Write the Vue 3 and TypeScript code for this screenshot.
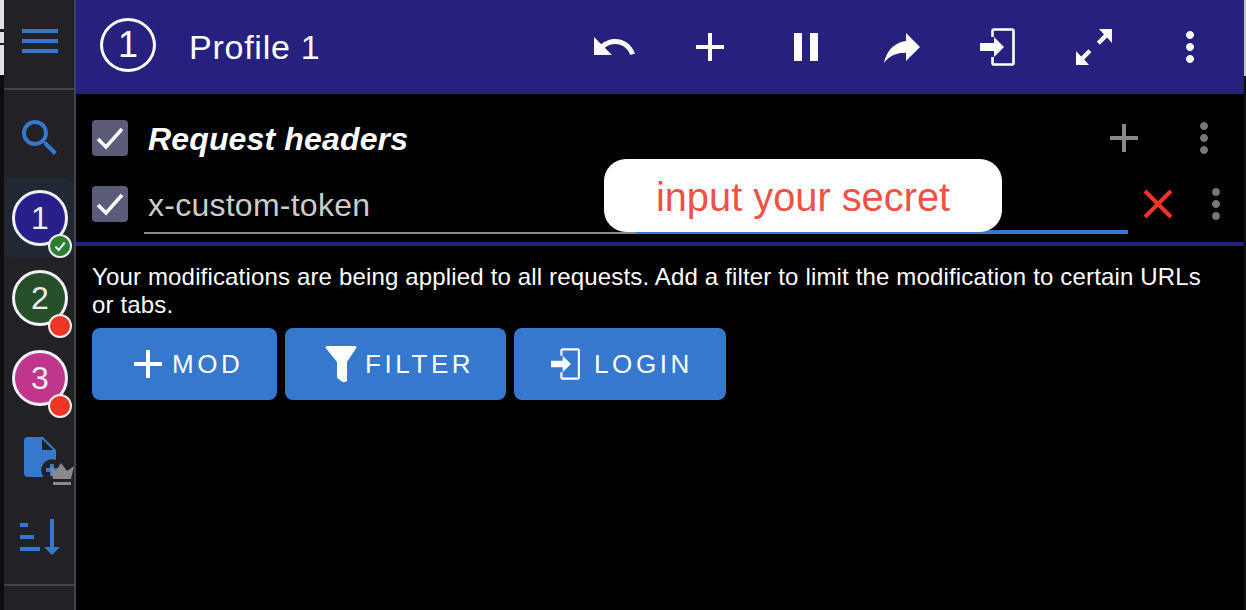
<script setup lang="ts">
/**
 * Header editor popup: profile rail on the left, one request header row and the action buttons
 */

const plus = 'M19 13h-6v6h-2v-6H5v-2h6V5h2v6h6v2z'
const dots =
	'M12 8c1.1 0 2-.9 2-2s-.9-2-2-2-2 .9-2 2 .9 2 2 2zm0 2c-1.1 0-2 .9-2 2s.9 2 2 2 2-.9 2-2-.9-2-2-2zm0 6c-1.1 0-2 .9-2 2s.9 2 2 2 2-.9 2-2-.9-2-2-2z'
const login =
	'M3 10h7V7l5 5-5 5v-3H3zM8.6 7V3.9c0-.7.6-1.3 1.3-1.3h9.2c.7 0 1.3.6 1.3 1.3v16.200c0 .7-.6 1.300-1.300 1.300H9.900c-.7 0-1.300-.6-1.300-1.300V17h1.300v3.100h9.200V3.900H9.900V7z'

const headerActions: { name: string; d: string }[] = [
	{
		name: 'undo',
		d: 'M12.5 8c-2.650 0-5.050.99-6.900 2.600L2 7v9h9l-3.620-3.620c1.390-1.160 3.160-1.880 5.120-1.880 3.540 0 6.550 2.310 7.600 5.500l2.370-.78C21.080 11.030 17.150 8 12.500 8z',
	},
	{ name: 'add', d: plus },
	{ name: 'pause', d: 'M6 19h4V5H6v14zm8-14v14h4V5h-4z' },
	{ name: 'forward', d: 'M14 9V5l7 7-7 7v-4.100c-5 0-8.500 1.600-11 5.100 1-5 4-10 11-11z' },
	{ name: 'login', d: login },
	{
		name: 'expand',
		d: 'M14.500 3H21v7l-2.500-2.700-3.600 3.600-1.500-1.500 3.600-3.600zM3 21v-7l2.600 2.700 3.600-3.600 1.500 1.500-3.600 3.600L9.500 21z',
	},
	{ name: 'more', d: dots },
]

const profiles = [
	{ id: 1, color: '#27208a', active: true },
	{ id: 2, color: '#264f2a', active: false },
	{ id: 3, color: '#c0368c', active: false },
]
</script>

<template>
	<div class="page">
		<div class="sliver-left"></div>

		<aside class="rail">
			<div class="rail-top">
				<div class="burger"><i></i><i></i><i></i></div>
			</div>
			<div class="rail-item">
				<svg class="icon-48 blue" viewBox="0 0 24 24">
					<path
						d="M15.500 14h-.79l-.28-.27C15.410 12.590 16 11.110 16 9.500 16 5.910 13.090 3 9.500 3S3 5.910 3 9.500 5.910 16 9.500 16c1.610 0 3.090-.59 4.230-1.570l.27.28v.79l5 4.990L20.490 19l-4.990-5zm-6 0C7.010 14 5 11.990 5 9.500S7.010 5 9.500 5 14 7.010 14 9.500 11.990 14 9.500 14z"
					/>
				</svg>
			</div>

			<div
				v-for="profile in profiles"
				:key="profile.id"
				class="profile"
				:class="{ active: profile.active }"
			>
				<div class="avatar" :style="{ background: profile.color }">{{ profile.id }}</div>
				<div class="badge" :class="profile.active ? 'ok' : 'off'">
					<svg v-if="profile.active" viewBox="0 0 24 24">
						<path d="M5 13l5 5 9-11" fill="none" stroke="#fff" stroke-width="3" />
					</svg>
				</div>
			</div>

			<div class="profile">
				<svg class="icon-48 blue" viewBox="0 0 48 48">
					<path d="M12 3h15l13 13v10A11 11 0 0 0 27.500 43H12a4 4 0 0 1-4-4V7a4 4 0 0 1 4-4z" />
					<path d="M26 5v11h11z" fill="#222226" />
					<path d="M34 30h4v4h4v4h-4v4h-4v-4h-4v-4h4z" />
				</svg>
				<svg class="crown" viewBox="0 0 24 22">
					<path d="M0 3l6 5 5-8 6 8 7-5-3 13H3zM3 19h18v3H3z" fill="#8a8a8a" />
				</svg>
			</div>

			<div class="rail-sort">
				<svg class="sort" viewBox="0 0 40 36">
					<path d="M0 4h8v4H0zM0 16h14v4H0zM0 28h20v4H0zM30 0h4v28h6l-8 8-8-8h6z" />
				</svg>
			</div>
			<div class="rail-rule"></div>
		</aside>

		<main class="main">
			<header class="topbar">
				<div class="profile-number">1</div>
				<h1 class="profile-name">Profile 1</h1>
				<div class="actions">
					<svg
						v-for="action in headerActions"
						:key="action.name"
						class="action"
						viewBox="0 0 24 24"
					>
						<path :d="action.d" fill="#fff" fill-rule="evenodd" />
					</svg>
				</div>
			</header>

			<section class="mods">
				<div class="row row-title">
					<span class="check">
						<svg viewBox="0 0 36 36">
							<path d="M6 19l8 8L30 9" fill="none" stroke="#fff" stroke-width="3.500" />
						</svg>
					</span>
					<span class="title">Request headers</span>
					<svg class="icon-48 grey" viewBox="0 0 24 24"><path :d="plus" /></svg>
					<svg class="icon-48 dim" viewBox="0 0 24 24"><path :d="dots" /></svg>
				</div>
				<div class="row row-header">
					<span class="check">
						<svg viewBox="0 0 36 36">
							<path d="M6 19l8 8L30 9" fill="none" stroke="#fff" stroke-width="3.500" />
						</svg>
					</span>
					<div class="field">
						<input class="field-input" type="text" value="x-custom-token" />
						<span class="field-focus"></span>
					</div>
					<svg class="icon-48" viewBox="0 0 48 48">
						<path d="M11 11l26 26M37 11L11 37" stroke="#f03524" stroke-width="4" />
					</svg>
					<svg class="icon-48 dim" viewBox="0 0 24 24"><path :d="dots" /></svg>
				</div>
			</section>

			<p class="notice">
				Your modifications are being applied to all requests. Add a filter to limit the modification to
				certain URLs or tabs.
			</p>

			<div class="buttons">
				<button type="button" class="btn">
					<svg class="icon-48" viewBox="0 0 24 24"><path :d="plus" fill="#fff" /></svg>
					MOD
				</button>
				<button type="button" class="btn">
					<svg class="icon-48" viewBox="0 0 48 48">
						<path
							d="M10 6h28q2 0 1.200 2L30 22v18q0 2-2 2h-2q-1 0-2-1l-3.500-3q-.5-.5-.5-1.500V22L8.800 8Q8 6 10 6z"
							fill="#fff"
						/>
					</svg>
					FILTER
				</button>
				<button type="button" class="btn">
					<svg class="icon-login" viewBox="0 0 24 24">
						<path :d="login" fill="#fff" fill-rule="evenodd" />
					</svg>
					LOGIN
				</button>
			</div>

			<div class="tip">input your secret</div>
		</main>

		<div class="sliver-right"></div>
	</div>
</template>

<style scoped>
.page {
	display: grid;
	grid-template-columns: 4px 72px 1fr 2px;
	width: 1246px;
	height: 610px;
	overflow: hidden;
	background: #000;
	font-family: 'Liberation Sans', Arial, sans-serif;
	color: #fff;
}

.sliver-left {
	background:
		linear-gradient(#1c1c1c, #1c1c1c) 0 29px / 100% 3px no-repeat,
		linear-gradient(#1c1c1c, #1c1c1c) 0 43px / 100% 2px no-repeat,
		linear-gradient(#e2e2e2, #e2e2e2) 0 0 / 100% 75px no-repeat,
		#0d0d0d;
}

.sliver-right {
	background:
		linear-gradient(#c4c4c4, #c4c4c4) 0 0 / 100% 76px no-repeat,
		#111;
}

.rail {
	display: flex;
	flex-direction: column;
	background: #222226;
	border-right: 2px solid #444448;
}

.rail-top {
	display: flex;
	align-items: center;
	justify-content: center;
	height: 90px;
	padding: 0 0 6px 2px;
	box-sizing: border-box;
	border-bottom: 2px solid #444448;
}

.burger {
	display: flex;
	flex-direction: column;
	gap: 6px;
	width: 36px;

	& i {
		display: block;
		height: 4px;
		background: #3578cd;
	}
}

.rail-item {
	display: flex;
	align-items: center;
	justify-content: center;
	height: 88px;
	padding: 8px 0 0 2px;
	box-sizing: border-box;
}

.icon-48 {
	flex: none;
	width: 48px;
	height: 48px;
}

.blue {
	fill: #3578cd;
}

.grey {
	fill: #888;
}

.dim {
	fill: #777;
}

.profile {
	position: relative;
	display: flex;
	align-items: center;
	justify-content: center;
	height: 80px;
	padding-left: 2px;
	box-sizing: border-box;
	border-radius: 8px;

	&.active {
		background: #222833;
	}
}

.avatar {
	display: flex;
	align-items: center;
	justify-content: center;
	width: 56px;
	height: 56px;
	box-sizing: border-box;
	border: 3px solid #f0f0f8;
	border-radius: 50%;
	font-size: 32px;
	color: #f0f0f0;
}

.badge {
	position: absolute;
	top: 56px;
	left: 44px;
	width: 24px;
	height: 24px;
	box-sizing: border-box;
	border: 2px solid #f0f0f0;
	border-radius: 50%;

	&.ok {
		background: #2e7d32;
	}

	&.off {
		background: #f03524;
	}

	& svg {
		display: block;
		width: 100%;
		height: 100%;
		padding: 2px;
		box-sizing: border-box;
	}
}

.crown {
	position: absolute;
	top: 45px;
	left: 46px;
	width: 24px;
	height: 22px;
}

.rail-sort {
	display: flex;
	align-items: center;
	justify-content: center;
	height: 80px;
	padding: 0 0 2px 2px;
	box-sizing: border-box;
}

.sort {
	width: 40px;
	height: 36px;
	fill: #3578cd;
}

.rail-rule {
	height: 2px;
	margin-top: 6px;
	background: #444448;
}

.main {
	position: relative;
	min-width: 0;
}

.topbar {
	display: flex;
	align-items: center;
	height: 94px;
	padding-left: 24px;
	padding-right: 6px;
	box-sizing: border-box;
	background: #26207f;
}

.profile-number {
	display: flex;
	align-items: center;
	justify-content: center;
	width: 56px;
	height: 54px;
	margin-top: -4px;
	box-sizing: border-box;
	border: 3px solid #fff;
	border-radius: 50%;
	font-size: 36px;
}

.profile-name {
	margin: 0 0 0 33px;
	font-size: 34px;
	font-weight: 400;
	letter-spacing: 0.75px;
}

.actions {
	display: flex;
	margin-left: auto;
}

.action {
	width: 48px;
	height: 48px;
	padding: 0 24px;
}

.mods {
	padding: 11px 0 5px;
	border-bottom: 4px solid #26207f;
}

.row {
	display: flex;
	align-items: center;
	height: 66px;
	padding-left: 16px;
}

.row-title {
	padding-right: 16px;
	gap: 32px;

	& .check {
		margin-right: -12px;
	}
}

.row-header {
	padding-right: 4px;
}

.check {
	flex: none;
	width: 36px;
	height: 36px;
	border-radius: 4px;
	background: #5c5c78;

	& svg {
		display: block;
	}
}

.title {
	flex: 1;
	padding-top: 2px;
	font-size: 32px;
	font-weight: 700;
	font-style: italic;
	letter-spacing: 0.15px;
}

.field {
	position: relative;
	flex: none;
	width: 984px;
	margin: 0 6px 0 16px;
}

.field-input {
	display: block;
	width: 100%;
	height: 60px;
	padding: 4px 4px 0;
	box-sizing: border-box;
	border: 0;
	border-bottom: 2px solid #888;
	outline: 0;
	background: transparent;
	font-family: inherit;
	font-size: 32px;
	letter-spacing: 0.25px;
	color: #ccc;
}

.field-focus {
	position: absolute;
	left: 492px;
	right: 0;
	bottom: 0;
	height: 4px;
	background: #3578cd;
}

.row-header .icon-48 + .icon-48 {
	margin-left: 10px;
}

.notice {
	margin: 17px 0 0 16px;
	width: 1130px;
	font-size: 24px;
	letter-spacing: 0.16px;
	line-height: 28px;
}

.buttons {
	display: grid;
	grid-template-columns: 185px 221px 212px;
	gap: 8px;
	margin: 9px 0 0 16px;
}

.btn {
	display: flex;
	align-items: center;
	height: 72px;
	padding: 0 0 0 32px;
	border: 0;
	border-radius: 8px;
	background: #3578cd;
	font-family: inherit;
	font-size: 26px;
	letter-spacing: 3.6px;
	color: #fff;
}

.icon-login {
	width: 40px;
	height: 40px;
	margin: 0 8px 0 0;
}

.tip {
	position: absolute;
	top: 159px;
	left: 528px;
	display: flex;
	align-items: center;
	justify-content: center;
	width: 398px;
	height: 73px;
	padding-top: 4px;
	box-sizing: border-box;
	border-radius: 22px;
	background: #fff;
	font-size: 39.8px;
	color: #ee5246;
}
</style>
